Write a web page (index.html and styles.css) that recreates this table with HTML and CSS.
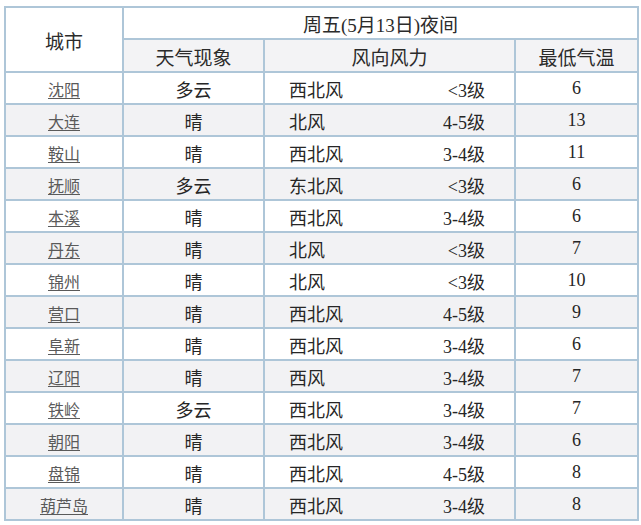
FILE: index.html
```html
<!DOCTYPE html>
<html lang="zh">
<head>
<meta charset="utf-8">
<title>天气预报</title>
<link rel="stylesheet" href="styles.css">
</head>
<body>
<div class="wrap">
<table class="weather">
<colgroup>
<col class="c-city"><col class="c-sky"><col class="c-wind"><col class="c-temp">
</colgroup>
<thead>
<tr class="h1">
<th rowspan="2" class="city-h">城市</th>
<th colspan="3" class="title">周五(5月13日)夜间</th>
</tr>
<tr class="h2">
<th>天气现象</th>
<th>风向风力</th>
<th>最低气温</th>
</tr>
</thead>
<tbody>
<tr><td class="city"><a>沈阳</a></td><td>多云</td><td class="wind"><div class="wf"><span>西北风</span><span class="lv">&lt;3级</span></div></td><td class="num">6</td></tr>
<tr><td class="city"><a>大连</a></td><td>晴</td><td class="wind"><div class="wf"><span>北风</span><span class="lv">4-5级</span></div></td><td class="num">13</td></tr>
<tr><td class="city"><a>鞍山</a></td><td>晴</td><td class="wind"><div class="wf"><span>西北风</span><span class="lv">3-4级</span></div></td><td class="num">11</td></tr>
<tr><td class="city"><a>抚顺</a></td><td>多云</td><td class="wind"><div class="wf"><span>东北风</span><span class="lv">&lt;3级</span></div></td><td class="num">6</td></tr>
<tr><td class="city"><a>本溪</a></td><td>晴</td><td class="wind"><div class="wf"><span>西北风</span><span class="lv">3-4级</span></div></td><td class="num">6</td></tr>
<tr><td class="city"><a>丹东</a></td><td>晴</td><td class="wind"><div class="wf"><span>北风</span><span class="lv">&lt;3级</span></div></td><td class="num">7</td></tr>
<tr><td class="city"><a>锦州</a></td><td>晴</td><td class="wind"><div class="wf"><span>北风</span><span class="lv">&lt;3级</span></div></td><td class="num">10</td></tr>
<tr><td class="city"><a>营口</a></td><td>晴</td><td class="wind"><div class="wf"><span>西北风</span><span class="lv">4-5级</span></div></td><td class="num">9</td></tr>
<tr><td class="city"><a>阜新</a></td><td>晴</td><td class="wind"><div class="wf"><span>西北风</span><span class="lv">3-4级</span></div></td><td class="num">6</td></tr>
<tr><td class="city"><a>辽阳</a></td><td>晴</td><td class="wind"><div class="wf"><span>西风</span><span class="lv">3-4级</span></div></td><td class="num">7</td></tr>
<tr><td class="city"><a>铁岭</a></td><td>多云</td><td class="wind"><div class="wf"><span>西北风</span><span class="lv">3-4级</span></div></td><td class="num">7</td></tr>
<tr><td class="city"><a>朝阳</a></td><td>晴</td><td class="wind"><div class="wf"><span>西北风</span><span class="lv">3-4级</span></div></td><td class="num">6</td></tr>
<tr><td class="city"><a>盘锦</a></td><td>晴</td><td class="wind"><div class="wf"><span>西北风</span><span class="lv">4-5级</span></div></td><td class="num">8</td></tr>
<tr><td class="city"><a>葫芦岛</a></td><td>晴</td><td class="wind"><div class="wf"><span>西北风</span><span class="lv">3-4级</span></div></td><td class="num">8</td></tr>
</tbody>
</table>
</div>
</body>
</html>
```
FILE: styles.css
```css
html, body {
  margin: 0;
  padding: 0;
  background: #ffffff;
}
.wrap {
  padding: 6px 0 0 4px;
}
.weather {
  table-layout: fixed;
  width: 635px;
  border-collapse: separate;
  border-spacing: 0;
  border-left: 2px solid #aec6d8;
  border-top: 2px solid #aec6d8;
  font-family: "Liberation Serif", "Noto Sans CJK SC", serif;
  color: #262626;
}
.c-city { width: 118px; }
.c-sky { width: 141px; }
.c-wind { width: 251px; }
.c-temp { width: 123px; }
.weather th,
.weather td {
  box-sizing: border-box;
  border-right: 2px solid #aec6d8;
  border-bottom: 2px solid #aec6d8;
  padding: 1px 0 0;
  text-align: center;
  vertical-align: middle;
  font-weight: normal;
}
.weather th {
  font-size: 19px;
  color: #2b2b2b;
}
.h1 th { height: 32px; background: #ffffff; }
.h2 th { height: 33px; background: #f3f3f5; }
.city-h { background: #ffffff; }
.weather td {
  height: 32px;
  font-size: 18px;
}
.weather tbody tr:nth-child(even) td {
  background: #f2f2f4;
}
.city a {
  font-size: 16px;
  color: #5a5a5a;
  text-decoration: underline;
  text-underline-offset: 2px;
}
.wind .wf {
  display: flex;
  justify-content: space-between;
  padding: 0 29px 0 24px;
}
.num {
  font-size: 19px;
}
```
